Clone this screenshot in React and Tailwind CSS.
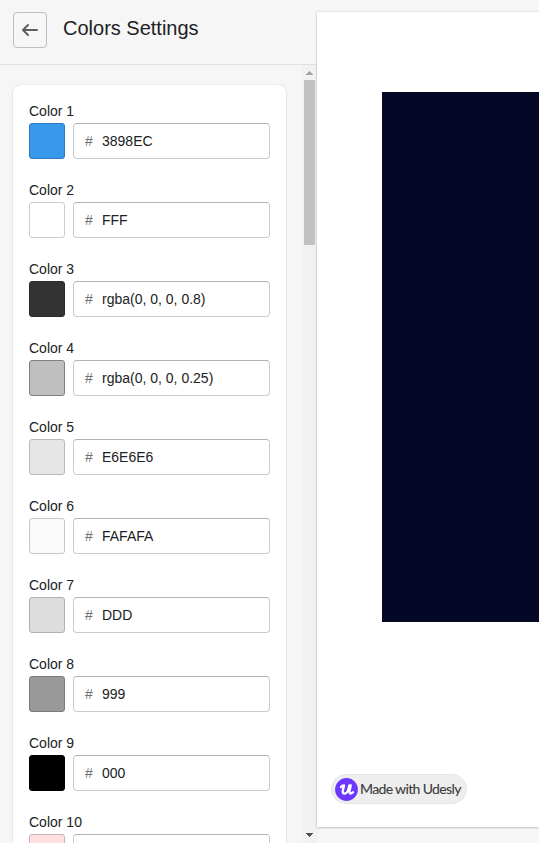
const colors = [
  { value: '3898EC', swatch: 'bg-[#3898ec] border-[#2d7abd]' },
  { value: 'FFF', swatch: 'bg-white border-[#cccccc]' },
  { value: 'rgba(0, 0, 0, 0.8)', swatch: 'bg-[#333333] border-[#292929]' },
  { value: 'rgba(0, 0, 0, 0.25)', swatch: 'bg-[#bfbfbf] border-[#808080]' },
  { value: 'E6E6E6', swatch: 'bg-[#e6e6e6] border-[#b8b8b8]' },
  { value: 'FAFAFA', swatch: 'bg-[#fafafa] border-[#c8c8c8]' },
  { value: 'DDD', swatch: 'bg-[#dddddd] border-[#b1b1b1]' },
  { value: '999', swatch: 'bg-[#999999] border-[#7a7a7a]' },
  { value: '000', swatch: 'bg-black border-black' },
  { value: '', swatch: 'bg-[#ffdede] border-[#ccb2b2]' },
];

function Header() {
  return (
    <header className="flex h-[65px] shrink-0 items-start border-b border-[#dfe0e8] pt-3 pl-[13px]">
      <button className="flex h-9 w-[34px] items-center justify-center rounded-[4px] border border-[#babfc3]" aria-label="Back">
        <svg viewBox="0 0 20 20" className="h-5 w-5" fill="#5c5f62">
          <path d="M17 9H5.414l3.293-3.293a.999.999 0 1 0-1.414-1.414l-5 5a.999.999 0 0 0 0 1.414l5 5a.997.997 0 0 0 1.414 0 .999.999 0 0 0 0-1.414L5.414 11H17a1 1 0 1 0 0-2z" />
        </svg>
      </button>
      <h1 className="ml-4 mt-0.5 text-[20px] leading-7">Colors Settings</h1>
    </header>
  );
}

function ColorField({ index, value, swatch }) {
  return (
    <div className="h-[79px] shrink-0">
      <div className="mb-0.5 text-[14px] leading-5">Color {index}</div>
      <div className="flex gap-2">
        <div className={`h-9 w-9 rounded-[3px] border ${swatch}`} />
        <div className="flex h-9 flex-1 items-center rounded-[4px] border border-[#c9cccf] border-t-[#aeb4b9] pl-[11px] text-[14px]">
          {value && (
            <>
              <span className="w-[17px] text-[#6d7175]">#</span>
              <span>{value}</span>
            </>
          )}
        </div>
      </div>
    </div>
  );
}

function Scrollbar() {
  return (
    <div className="flex w-[15px] shrink-0 flex-col bg-[#f1f1f1]">
      <svg viewBox="0 0 15 15" className="h-[15px] w-[15px] shrink-0" shapeRendering="crispEdges" fill="#a3a3a3">
        <path d="M7 6h1v1h1v1h1v1h1v1H4V9h1V8h1V7h1z" />
      </svg>
      <div className="ml-[2px] h-[165px] w-[11px] shrink-0 bg-[#c1c1c1]" />
      <div className="flex-1" />
      <svg viewBox="0 0 15 15" className="h-[15px] w-[15px] shrink-0" shapeRendering="crispEdges" fill="#505050">
        <path d="M4 5h7v1h-1v1H9v1H8v1H7V8H6V7H5V6H4z" />
      </svg>
    </div>
  );
}

function Badge() {
  return (
    <div className="flex h-[30px] w-[136px] items-center rounded-full border border-[#e6e6e6] bg-[#eeeeee] pl-[3px]">
      <svg viewBox="0 0 23 23" className="h-[23px] w-[23px] shrink-0">
        <circle cx="11.5" cy="11.5" r="11.4" fill="#6d37ff" />
        <path d="M6 9C6.8 7.8 7.8 7.3 9 7.3C8.8 9.5 7.7 11.8 7.7 13.8C7.8 16.3 10.7 16.1 12.1 14.1C13.5 12 13.8 9.5 14.3 7.4H15.8C15.3 9.7 14.4 12.5 14.5 14.2C14.7 16.2 17 15.6 18 14.2" fill="none" stroke="#fff" strokeWidth="2.3" strokeLinecap="round" strokeLinejoin="round" />
      </svg>
      <span className="-mt-px ml-[2px] whitespace-nowrap font-[Lato,sans-serif] text-[14px] font-medium tracking-[-0.66px] text-[#404040]">
        Made with Udesly
      </span>
    </div>
  );
}

export default function App() {
  return (
    <div className="flex h-[843px] w-[539px] overflow-hidden bg-[#f6f6f6] font-['Liberation_Sans',Arial,sans-serif] text-[#202223]">
      <aside className="flex w-[317px] shrink-0 flex-col">
        <Header />
        <div className="flex min-h-0 flex-1">
          <div className="flex-1 overflow-hidden pt-5 pr-4 pl-[13px]">
            <section className="flex flex-col rounded-[8px] bg-white p-4 shadow-[0_0_2px_rgba(23,24,24,0.12),0_1px_2px_rgba(0,0,0,0.12)]">
              {colors.map((color, i) => (
                <ColorField key={i} index={i + 1} {...color} />
              ))}
            </section>
          </div>
          <Scrollbar />
        </div>
      </aside>
      <main className="flex-1 pt-3">
        <div className="flex h-[815px] flex-col bg-white pt-20 shadow-[0_0_2px_rgba(23,24,24,0.2),0_1px_2px_rgba(0,0,0,0.15)]">
          <div className="ml-[65px] h-[530px] shrink-0 bg-[#040826]" />
          <div className="mt-[152px] ml-[14px]">
            <Badge />
          </div>
        </div>
      </main>
    </div>
  );
}
